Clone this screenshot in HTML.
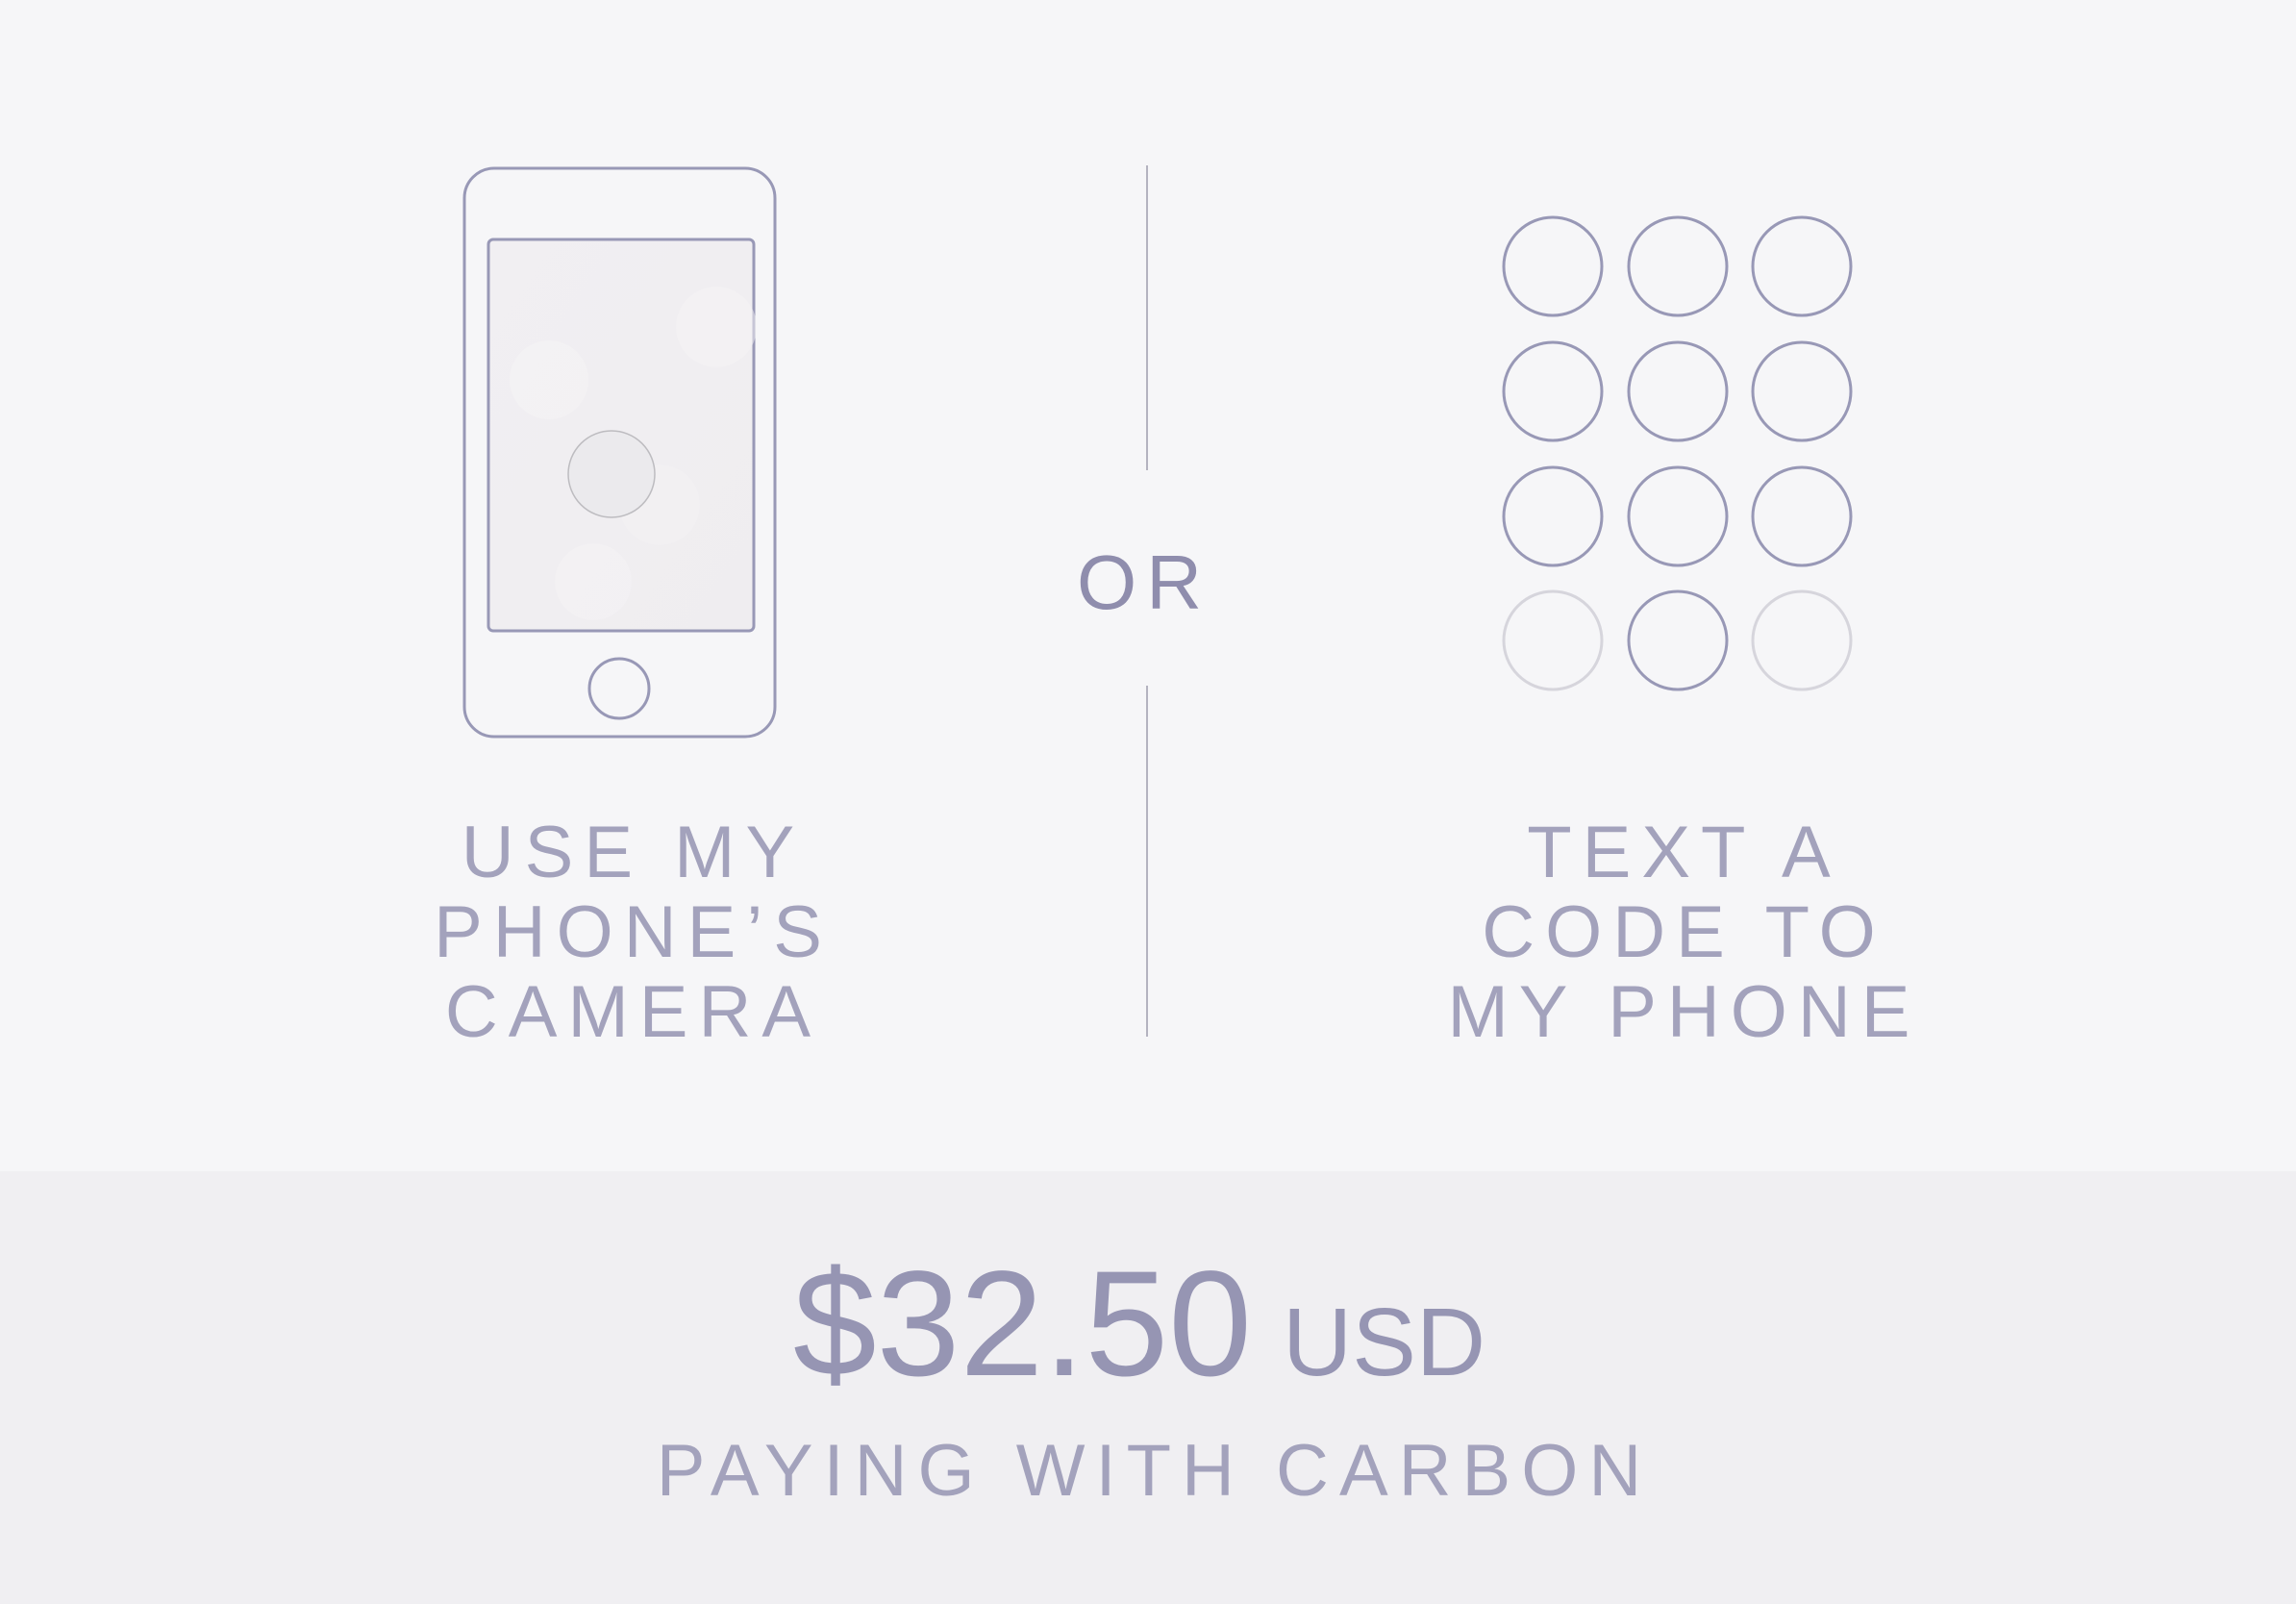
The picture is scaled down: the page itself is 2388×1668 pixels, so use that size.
<!DOCTYPE html>
<html><head><style>
html,body{margin:0;padding:0}
body{width:2388px;height:1668px;position:relative;overflow:hidden;background:#f6f6f8;font-family:"Liberation Sans",sans-serif;color:#9695b3}
.bot{position:absolute;left:0;top:1218px;width:2388px;height:450px;background:#f0eff2}
.t{position:absolute;text-align:center;white-space:nowrap}
.lab{font-size:76px;line-height:83px;letter-spacing:11px;padding-left:11px;box-sizing:border-box;color:#a3a2bc}
</style></head><body>
<div class="bot"></div>
<svg width="2388" height="1668" style="position:absolute;left:0;top:0">
<defs><linearGradient id="g" x1="0" y1="0" x2="1" y2="1"><stop offset="0" stop-color="#f1eff2"/><stop offset="1" stop-color="#efedf0"/></linearGradient></defs>
<rect x="483" y="175" width="323" height="591" rx="31" fill="none" stroke="#9898b6" stroke-width="3"/>
<rect x="508" y="249" width="276" height="407" rx="5" fill="url(#g)" stroke="#9898b6" stroke-width="3"/>
<circle cx="571" cy="395" r="41" fill="#f5f4f5" opacity=".6"/>
<circle cx="745" cy="340" r="42" fill="#f5f4f5" opacity=".5"/>
<circle cx="617" cy="605" r="40" fill="#f5f4f5" opacity=".5"/>
<circle cx="686" cy="525" r="42" fill="#f3f2f3" opacity=".5"/>
<circle cx="636" cy="493" r="45" fill="#ebeaed" stroke="#bdbcc0" stroke-width="1.5"/>
<circle cx="644" cy="716" r="31" fill="none" stroke="#9898b6" stroke-width="3"/>
<line x1="1193" y1="172" x2="1193" y2="489" stroke="#b4b3c0" stroke-width="2"/>
<line x1="1193" y1="713" x2="1193" y2="1078" stroke="#b4b3c0" stroke-width="2"/>
<g fill="none" stroke-width="3">
<g stroke="#9898b6">
<circle cx="1615" cy="277" r="51"/><circle cx="1745" cy="277" r="51"/><circle cx="1874" cy="277" r="51"/>
<circle cx="1615" cy="407" r="51"/><circle cx="1745" cy="407" r="51"/><circle cx="1874" cy="407" r="51"/>
<circle cx="1615" cy="537" r="51"/><circle cx="1745" cy="537" r="51"/><circle cx="1874" cy="537" r="51"/>
<circle cx="1745" cy="666" r="51"/></g>
<g stroke="#d6d5dc"><circle cx="1615" cy="666" r="51"/><circle cx="1874" cy="666" r="51"/></g>
</g>
</svg>
<div class="t" style="left:1090px;top:560px;width:200px;font-size:80px;letter-spacing:10px;color:#8f8dad">OR</div>
<div class="t lab" style="left:340px;top:845px;width:626px">USE MY<br>PHONE’S<br>CAMERA</div>
<div class="t lab" style="left:1420px;top:845px;width:652px">TEXT A<br>CODE TO<br>MY PHONE</div>
<div class="t" style="left:775px;top:1288px;width:820px;color:#9695b3"><span style="font-size:156px">$32.50</span><span style="font-size:100px;margin-left:32px">USD</span></div>
<div class="t lab" style="left:630px;top:1488px;width:1130px;letter-spacing:11px;padding-left:11px">PAYING WITH CARBON</div>
</body></html>
